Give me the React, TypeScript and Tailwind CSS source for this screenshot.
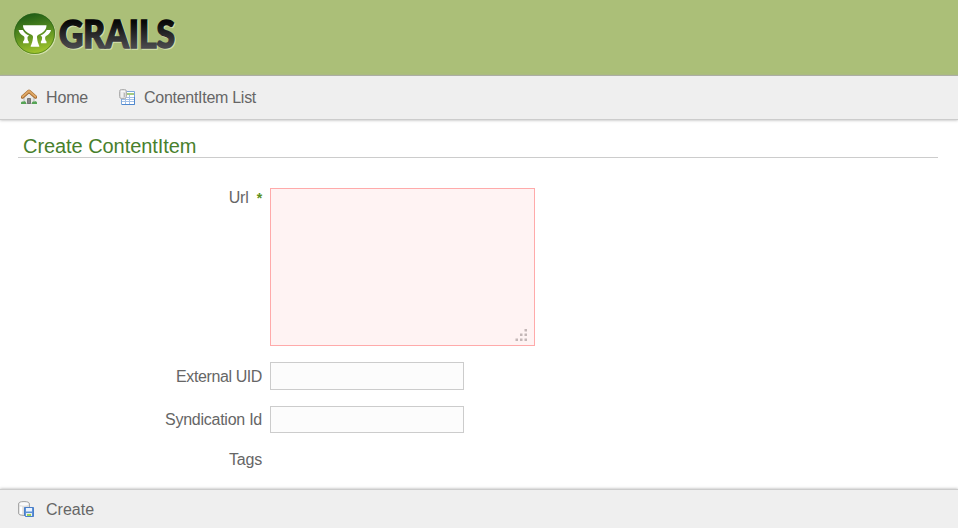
import React from "react";

function GrailsLogo() {
  return (
    <svg className="overflow-visible" width="180" height="60" viewBox="0 0 180 60" role="img" aria-label="Grails">
      <defs>
        <linearGradient id="disc" x1="0.35" y1="0" x2="0.6" y2="1">
          <stop offset="0" stopColor="#1d5a16" />
          <stop offset="0.5" stopColor="#5a8f20" />
          <stop offset="1" stopColor="#a8c92f" />
        </linearGradient>
        <linearGradient id="word" x1="0" y1="0" x2="0" y2="1">
          <stop offset="0.25" stopColor="#080808" />
          <stop offset="0.8" stopColor="#48484b" />
        </linearGradient>
      </defs>
      <circle cx="25.400" cy="26.600" r="20.500" fill="#d3dfb0" />
      <circle cx="24.600" cy="25.600" r="20.400" fill="url(#disc)" />
      <circle cx="24.600" cy="25.600" r="19.900" fill="none" stroke="#276018" strokeOpacity="0.55" />
      <g fill="#fff">
        <path d="M13 17.200h23.500c0 4.500-3.500 7.800-7.500 9.200-1.500.6-2.200 1.500-2 3 .2 2 .6 4.500 1.500 6.500.2 1 .9 1.200.8 2.800h-8.600c-.1-1.600.6-1.800.8-2.800.9-2 1.300-4.500 1.500-6.500.2-1.500-.5-2.400-2-3-4-1.400-8-4.700-8-9.200z" />
        <path d="M8.600 22h4.200c1.400 2.700 3.200 4.300 6.200 5.400-.3.600-1.400.9-1.500 1.700 0 2 .3 3.500 1.200 4.500v1.700h-5.600v-1.700c1-1 1.600-2.500 1.300-4.300-.2-1.200-1.400-1.200-2.500-2.200C10.200 25.800 9 24 8.600 22z" />
        <path d="M41 22h-4.200c-1.400 2.700-3.200 4.300-6.200 5.400.3.600 1.400.9 1.500 1.700 0 2-.3 3.500-1.200 4.500v1.700h5.600v-1.700c-1-1-1.600-2.500-1.300-4.300.2-1.200 1.400-1.200 2.500-2.200 1.700-1.300 2.900-3.100 3.300-5.100z" />
      </g>
      <g fontFamily="Lato, 'Liberation Sans', sans-serif" fontWeight="900" fontSize="37.500" strokeWidth="1.500">
        <text x="50" y="40.700" textLength="116" lengthAdjust="spacingAndGlyphs" fill="#d3dfb0" stroke="#d3dfb0">GRAILS</text>
        <text x="49" y="39.700" textLength="116" lengthAdjust="spacingAndGlyphs" fill="url(#word)" stroke="url(#word)">GRAILS</text>
      </g>
    </svg>
  );
}

function HouseIcon() {
  return (
    <svg className="mb-0.5" width="16" height="16" viewBox="0 0 16 16">
      <path d="M3 8l5-4.500L13 8v6.500H3z" fill="#e9e9e7" stroke="#999" strokeWidth=".6" />
      <path d="M6.500 9.500h3v5h-3z" fill="#858585" stroke="#666" strokeWidth=".8" />
      <path d="M1.500 8L8 2.200 14.500 8" fill="none" stroke="#a2682c" strokeWidth="3.400" strokeLinejoin="round" strokeLinecap="round" />
      <path d="M1.500 7.700L8 2 14.500 7.700" fill="none" stroke="#dfa866" strokeWidth="1.900" strokeLinejoin="round" strokeLinecap="round" />
      <path d="M0 15v-1.500c.5-1.200 1.500-1.300 2.300-.8.900-.9 2.200-.3 2.700.8V15zM11 15v-1.500c.5-1.200 1.500-1.300 2.300-.8.900-.9 2.200-.3 2.700.8V15z" fill="#55a455" />
    </svg>
  );
}

function TableIcon() {
  return (
    <svg className="mb-0.5" width="16" height="16" viewBox="0 0 16 16">
      <path d="M2.500 2.500h13v13h-13z" fill="#fff" stroke="#7aa7dc" />
      <path d="M7 4h8v2H7z" fill="#a4c980" />
      <path d="M3 8.500h12M3 10.500h12M3 12.500h12M6.500 6v9M10.500 6v9" stroke="#a3c0e6" />
      <path d="M3 15.500h12.500V8" fill="none" stroke="#4f88ce" />
      <rect x=".5" y=".5" width="7" height="9" rx="2" fill="#dadada" stroke="#b0b0b0" />
      <path d="M2 2.500h4M3 3.500v5" stroke="#f8f8f8" strokeWidth="1.500" />
      <path d="M5.500 4v4" stroke="#bbb" />
    </svg>
  );
}

function SaveIcon() {
  return (
    <svg className="mb-0.5" width="16" height="16" viewBox="0 0 16 16">
      <path d="M.5 3C.5 1.300 2.500.5 6 .5s5.500.8 5.500 2.500v9c0 1.700-2 2.500-5.500 2.500S.5 13.700.5 12z" fill="#dfdfdf" stroke="#a8a8a8" />
      <ellipse cx="6" cy="3" rx="4.500" ry="1.700" fill="#fafafa" />
      <path d="M3 5.500v7.500" stroke="#fff" strokeWidth="2.500" />
      <path d="M6.500 6.500h9v9h-8l-1-1z" fill="#5b91d7" stroke="#4a7fc9" />
      <path d="M8 7h6v3.500H8z" fill="#eaf3ff" />
      <path d="M8 12h6v3H8z" fill="#eee" />
      <path d="M9 13h4v2H9z" fill="#9bd35c" />
    </svg>
  );
}

function ResizeGrip() {
  return (
    <svg className="absolute bottom-1 right-[7px]" width="13" height="13" viewBox="0 0 13 13" fill="#c4b7b7">
      <path d="M9.500 0H12v2.500H9.500zM5 4.500h2.500V7H5zM9.500 4.500H12V7H9.500zM.5 9.500H3V12H.5zM5 9.500h2.500V12H5zM9.500 9.500H12V12H9.500z" />
    </svg>
  );
}

const inputClass = "block w-[194px] border border-[#ccc] bg-[#fcfcfc] px-1 outline-none";

export default function App() {
  return (
    <div className="flex h-[528px] w-[958px] flex-col overflow-hidden bg-white font-['Liberation_Sans',Arial,sans-serif] text-base leading-5 text-[#666]">
      <header className="h-[76px] shrink-0 border-b border-[#adb1a1] bg-[#abbf78] pl-2.5 pt-2">
        <GrailsLogo />
      </header>
      <nav className="z-10 flex h-11 shrink-0 items-center border-b border-[#ccc] bg-[#efefef] pl-[21px] shadow-[0_0_3px_0_#aaaaaa]">
        <a className="flex w-[98px] items-center gap-[9px] tracking-[-0.15px]"><HouseIcon />Home</a>
        <a className="flex items-center gap-[9px] tracking-[-0.28px]"><TableIcon />ContentItem List</a>
      </nav>
      <main className="h-[369px] shrink-0">
        <h1 className="ml-[18px] mr-5 mt-4 h-[22px] border-b border-[#ccc] pl-[5px] text-xl leading-5 tracking-[-0.06px] text-[#48802c]">Create ContentItem</h1>
        <form className="pt-[30px]">
          <div className="flex h-[158px] gap-2">
            <label className="w-[262px] text-right tracking-[-0.2px]">Url <span className="ml-1 text-sm leading-5 font-bold text-[#5a8f20]">*</span></label>
            <div className="relative">
              <textarea className="block h-[158px] w-[265px] resize-none border border-[#ffaaaa] bg-[#fff3f3] p-1 outline-none" />
              <ResizeGrip />
            </div>
          </div>
          <div className="mt-4 flex gap-2">
            <label className="w-[262px] pt-[5px] text-right tracking-[-0.4px]">External UID</label>
            <input className={`${inputClass} h-7`} />
          </div>
          <div className="mt-4 flex gap-2">
            <label className="w-[262px] pt-1 text-right tracking-[-0.25px]">Syndication Id</label>
            <input className={`${inputClass} h-[27px]`} />
          </div>
          <div className="mt-[17px] w-[262px] text-right tracking-[-0.2px]">Tags</div>
        </form>
      </main>
      <footer className="z-10 flex h-[39px] shrink-0 items-center border-t border-[#ccc] bg-[#efefef] pl-[18px] pt-0.5 shadow-[0_0_3px_0_#aaaaaa]">
        <button type="button" className="flex items-center gap-3"><SaveIcon />Create</button>
      </footer>
    </div>
  );
}
